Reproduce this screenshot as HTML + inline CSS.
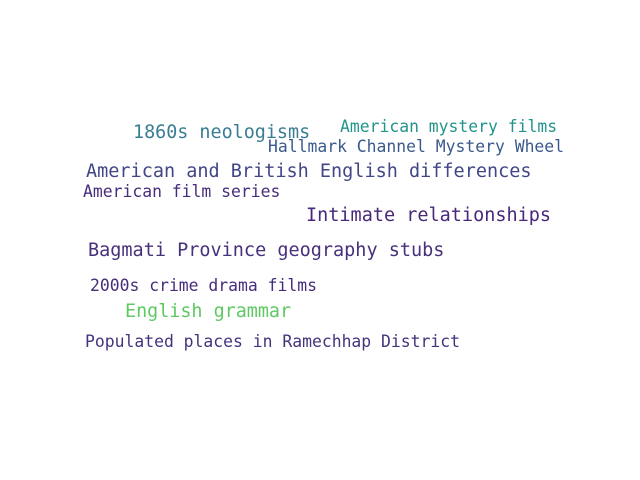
<!DOCTYPE html>
<html><head><meta charset="utf-8"><style>
html,body{margin:0;padding:0;background:#fff;width:640px;height:480px;overflow:hidden}
div{position:absolute;white-space:nowrap;font-family:"DejaVu Sans Mono",monospace;line-height:1}
</style></head><body>
<div style="left:133px;top:124px;font-size:18.4px;color:#3a7d92">1860s neologisms</div>
<div style="left:340px;top:119px;font-size:16.4px;color:#23948b">American mystery films</div>
<div style="left:268px;top:139px;font-size:16.4px;color:#3b5a8c">Hallmark Channel Mystery Wheel</div>
<div style="left:86px;top:163px;font-size:18.5px;color:#424686">American and British English differences</div>
<div style="left:83px;top:184px;font-size:16.4px;color:#482d7b">American film series</div>
<div style="left:306px;top:207px;font-size:18.5px;color:#482878">Intimate relationships</div>
<div style="left:88px;top:242px;font-size:18.5px;color:#47307c">Bagmati Province geography stubs</div>
<div style="left:90px;top:278px;font-size:16.4px;color:#472d7b">2000s crime drama films</div>
<div style="left:125px;top:303px;font-size:18.4px;color:#5ec962">English grammar</div>
<div style="left:85px;top:334px;font-size:16.4px;color:#46337e">Populated places in Ramechhap District</div>
</body></html>
